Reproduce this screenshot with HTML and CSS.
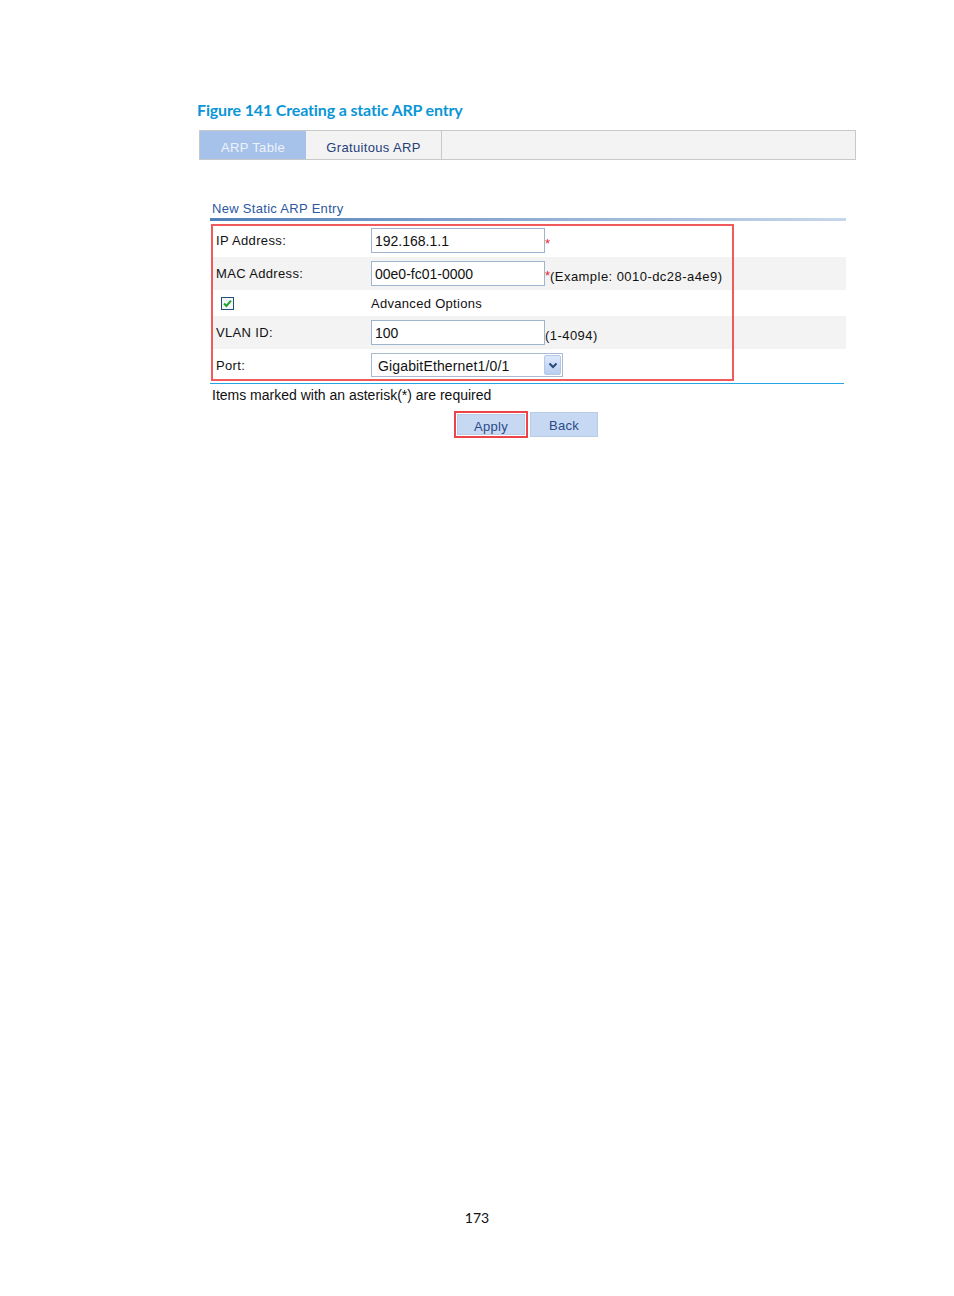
FILE: index.html
```html
<!DOCTYPE html>
<html>
<head>
<meta charset="utf-8">
<link rel="stylesheet" href="styles.css">
</head>
<body>
<div class="page">
  <div class="caption">Figure 141 Creating a static ARP entry</div>
  <div class="tabs">
    <div class="tab tab-active">ARP Table</div>
    <div class="tab">Gratuitous ARP</div>
  </div>
  <div class="panel">
    <div class="panel-title">New Static ARP Entry</div>
    <div class="title-rule"></div>
    <div class="form">
      <div class="row">
        <div class="label">IP Address:</div>
        <div class="value"><div class="input">192.168.1.1</div><span class="req">*</span></div>
      </div>
      <div class="row row-gray">
        <div class="label">MAC Address:</div>
        <div class="value"><div class="input">00e0-fc01-0000</div><span class="req">*</span><span class="hint">(Example: 0010-dc28-a4e9)</span></div>
      </div>
      <div class="row row-short">
        <div class="label"><span class="checkbox"><svg width="11" height="11" viewBox="0 0 11 11"><path d="M2 5.5 L4.4 8 L9 2.6" fill="none" stroke="#1fa32a" stroke-width="2"/></svg></span></div>
        <div class="value plain">Advanced Options</div>
      </div>
      <div class="row row-gray">
        <div class="label">VLAN ID:</div>
        <div class="value"><div class="input">100</div><span class="hint">(1-4094)</span></div>
      </div>
      <div class="row row-last">
        <div class="label">Port:</div>
        <div class="value">
          <div class="select"><span class="select-text">GigabitEthernet1/0/1</span><span class="select-btn"><svg width="10" height="7" viewBox="0 0 10 7"><path d="M1.5 1.5 L5 5 L8.5 1.5" fill="none" stroke="#2b4a7a" stroke-width="2"/></svg></span></div>
        </div>
      </div>
      <div class="highlight-box"></div>
    </div>
    <div class="bottom-rule"></div>
    <div class="note">Items marked with an asterisk(*) are required</div>
    <div class="buttons">
      <div class="btn-mark"><div class="btn">Apply</div></div>
      <div class="btn">Back</div>
    </div>
  </div>
  <div class="page-number">173</div>
</div>
</body>
</html>
```

FILE: styles.css
```css
html, body {
  margin: 0;
  padding: 0;
  background: #ffffff;
}

.page {
  width: 954px;
  height: 1296px;
  padding-top: 100px;
  box-sizing: border-box;
  font-family: "Liberation Sans", Arial, sans-serif;
}

.caption {
  margin-left: 197px;
  font-family: "Lato", "Liberation Sans", sans-serif;
  font-weight: bold;
  font-size: 16px;
  line-height: 20px;
  color: #0a96d6;
  letter-spacing: -0.15px;
}

.tabs {
  margin-left: 199px;
  margin-top: 10px;
  width: 657px;
  height: 30px;
  box-sizing: border-box;
  border: 1px solid #c9c9c9;
  background: #f3f3f3;
  display: flex;
}

.tab {
  width: 136px;
  box-sizing: border-box;
  border-right: 1px solid #c9c9c9;
  font-size: 13px;
  letter-spacing: 0.35px;
  line-height: 28px;
  text-align: center;
  color: #27407a;
  padding-top: 3px;
}

.tab-active {
  width: 106px;
  background: #a6c2ea;
  color: #edf2fa;
  border-right: none;
}

.panel {
  margin-left: 210px;
  width: 636px;
}

.panel-title {
  margin-top: 40px;
  padding-left: 2px;
  font-size: 13px;
  letter-spacing: 0.3px;
  line-height: 18px;
  color: #2c58a0;
}

.title-rule {
  height: 3px;
  margin-top: 0px;
  background: linear-gradient(to right, #4f7fb9 0%, #8aa9d0 45%, #c7d7eb 100%);
}

.form {
  position: relative;
  margin-top: 3px;
  margin-left: 1px;
}

.row {
  display: flex;
  align-items: center;
  height: 33px;
  font-size: 13px;
  color: #111;
}

.row-gray {
  background: #f3f3f3;
}

.row-short {
  height: 26px;
}

.row-last {
  height: 32px;
}

.label {
  width: 160px;
  padding-left: 5px;
  box-sizing: border-box;
  letter-spacing: 0.35px;
}

.value {
  display: flex;
  align-items: center;
}

.value.plain {
  letter-spacing: 0.3px;
}

.input {
  width: 174px;
  height: 25px;
  box-sizing: border-box;
  border: 1px solid #9fb5cf;
  background: #fff;
  font-size: 14px;
  line-height: 25px;
  padding-left: 3px;
  color: #111;
}

.req {
  color: #e8222a;
  font-size: 13px;
  align-self: flex-start;
  margin-top: 8px;
}

.row-gray .req {
  margin-top: 7px;
}

.hint {
  margin-top: 6px;
  letter-spacing: 0.45px;
}

.checkbox {
  display: flex;
  align-items: center;
  justify-content: center;
  width: 13px;
  height: 13px;
  box-sizing: border-box;
  border: 1px solid #1d4f7e;
  background: #f4f6f8;
  margin-left: 5px;
}

.select {
  width: 192px;
  height: 24px;
  box-sizing: border-box;
  border: 1px solid #a9bbd2;
  background: #fff;
  display: flex;
  align-items: center;
  justify-content: space-between;
}

.select-text {
  font-size: 14px;
  padding-left: 6px;
  padding-top: 2px;
  letter-spacing: 0.15px;
}

.select-btn {
  width: 17px;
  height: 20px;
  margin-right: 1px;
  box-sizing: border-box;
  border: 1px solid #b6c8e6;
  border-radius: 2px;
  background: linear-gradient(#dde8fb, #b9cdf1);
  display: flex;
  align-items: center;
  justify-content: center;
}

.highlight-box {
  position: absolute;
  left: 0;
  top: 0;
  width: 523px;
  height: 157px;
  box-sizing: border-box;
  border: 2px solid #f05a5a;
}

.bottom-rule {
  height: 1px;
  margin-top: 2px;
  margin-right: 2px;
  background: #22a6e6;
}

.note {
  margin-top: 2px;
  padding-left: 2px;
  font-size: 14px;
  line-height: 18px;
  color: #111;
}

.buttons {
  display: flex;
  justify-content: center;
  align-items: center;
  gap: 2px;
  margin-top: 7px;
  padding-right: 4px;
}

.btn-mark {
  border: 2px solid #ec4448;
  padding: 1px;
}

.btn {
  width: 68px;
  height: 25px;
  box-sizing: border-box;
  background: #c7d9f2;
  border: 1px solid #b9cdea;
  color: #2a4a88;
  font-size: 13px;
  letter-spacing: 0.3px;
  line-height: 25px;
  text-align: center;
}

.btn-mark .btn {
  width: 68px;
  height: 21px;
  line-height: 23px;
}

.page-number {
  margin-top: 771px;
  text-align: center;
  font-family: "Lato", "Liberation Sans", sans-serif;
  font-size: 14px;
  line-height: 18px;
  color: #111;
}
```
